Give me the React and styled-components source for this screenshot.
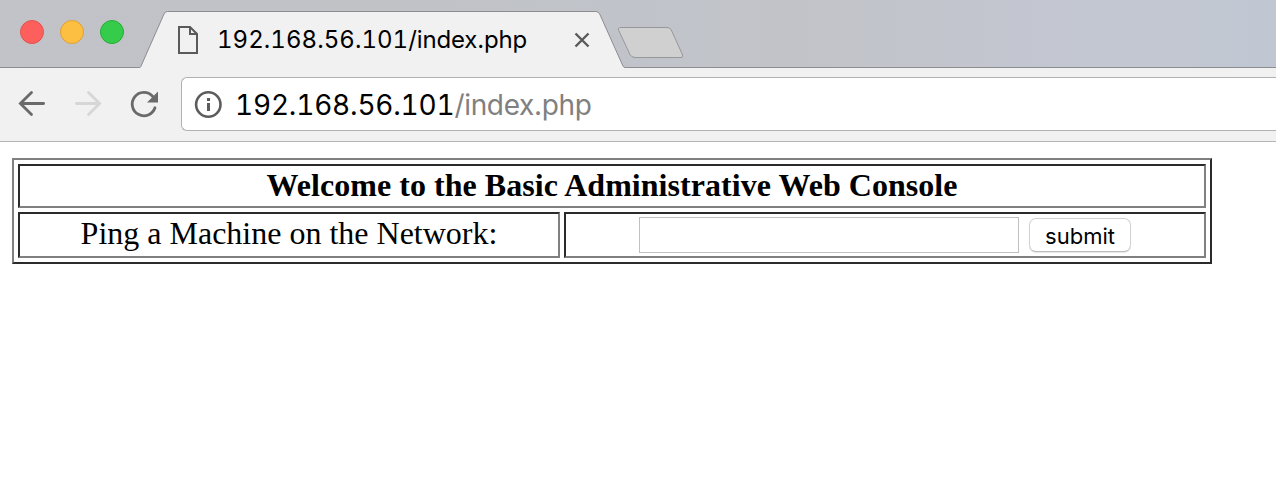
import React from "react";
import styled, { createGlobalStyle } from "styled-components";

const GlobalStyle = createGlobalStyle`
  * { box-sizing: border-box; }
  html, body { margin: 0; background: #fff; overflow: hidden; }
`;

const uiFont = `Inter, "Liberation Sans", sans-serif`;

const Window = styled.div`
  width: 1276px;
  height: 478px;
  display: flex;
  flex-direction: column;
  overflow: hidden;
  background: #fff;
`;

const TabStrip = styled.header`
  display: flex;
  align-items: flex-start;
  height: 68px;
  background: linear-gradient(90deg, #c2c3c8 0%, #c1c2c6 30%, #c0c4ca 50%, #c2c3c8 62%, #c3c7d2 85%, #c1c7d2 100%);
  box-shadow: inset 0 -1px 0 #8c8d90;
`;

const TrafficLights = styled.div`
  display: flex;
  gap: 16px;
  width: 140px;
  padding: 20px 0 0 20px;
`;

const Light = styled.span`
  width: 24px;
  height: 24px;
  border-radius: 50%;
  background: ${(p) => p.$fill};
  border: 1px solid ${(p) => p.$edge};
`;

const Tab = styled.div`
  position: relative;
  display: flex;
  align-items: center;
  width: 485px;
  height: 68px;
  padding: 12px 35px 0 37px;
`;

const TabShape = styled.svg`
  position: absolute;
  inset: 0;
`;

const TabIcon = styled.svg`
  position: relative;
  flex: none;
`;

const Host = styled.span`
  font-variant-numeric: tabular-nums;
  letter-spacing: ${(p) => p.$track};
`;

const TabTitle = styled.span`
  position: relative;
  flex: 1;
  margin-left: 18px;
  font: 400 24px/30px ${uiFont};
  letter-spacing: -0.15px;
  white-space: nowrap;
  color: #000;
`;

const NewTab = styled.svg`
  margin: 26px 0 0 -9px;
`;

const Toolbar = styled.nav`
  display: flex;
  align-items: flex-start;
  height: 74px;
  padding-top: 9px;
  background: #f1f1f1;
  border-bottom: 1px solid #b4b4b4;
`;

const NavButtons = styled.div`
  display: flex;
  gap: 24px;
  width: 181px;
  padding: 11px 0 0 16px;
`;

const AddressBar = styled.div`
  display: flex;
  align-items: center;
  flex: 1;
  height: 54px;
  padding-left: 11px;
  background: #fff;
  border: 1px solid #b1b1b1;
  border-right: 0;
  border-radius: 6px 0 0 6px;
`;

const Url = styled.span`
  margin: 1px 0 0 12px;
  font: 400 28px/34px ${uiFont};
  letter-spacing: -0.35px;
  white-space: nowrap;
  color: #000;
`;

const UrlPath = styled.span`
  color: #808080;
`;

const Page = styled.main`
  flex: 1;
  padding: 16px 12px;
  font-family: "Liberation Serif", "Times New Roman", serif;
  font-size: 32px;
  color: #000;
`;

const ConsoleTable = styled.form`
  display: grid;
  grid-template-columns: 542px 642px;
  grid-template-rows: 44px 46px;
  gap: 4px;
  width: 1200px;
  padding: 4px;
  border: 2px solid;
  border-color: #808080 #2b2b2b #2b2b2b #808080;
`;

const Cell = styled.div`
  display: flex;
  align-items: center;
  justify-content: center;
  grid-column: ${(p) => (p.$wide ? "1 / -1" : "auto")};
  padding-bottom: ${(p) => p.$lift || 0}px;
  border: 2px solid;
  border-color: #2b2b2b #808080 #808080 #2b2b2b;
  font-weight: ${(p) => (p.$wide ? 700 : 400)};
  letter-spacing: ${(p) => (p.$wide ? "0.04px" : "0")};
  line-height: 36px;
  white-space: nowrap;
`;

const HostInput = styled.input`
  width: 380px;
  height: 36px;
  margin: 0 10px 0 0;
  padding: 0 6px;
  border: 1px solid #c0c0c0;
  border-radius: 0;
  background: #fff;
  font: 22px ${uiFont};
  outline: 0;
`;

const SubmitButton = styled.button`
  width: 102px;
  height: 34px;
  padding: 2px 0 0;
  border: 1px solid #d2d2d2;
  border-bottom-color: #bcbcbc;
  border-radius: 7px;
  background: #fff;
  box-shadow: 0 1px 1px rgba(0, 0, 0, 0.1);
  font: 400 22px/30px ${uiFont};
  color: #000;
`;

function PageIcon() {
  return (
    <TabIcon width="22" height="30" viewBox="0 0 22 30" fill="none" stroke="#5a5a5a" strokeWidth="2">
      <path d="M2 2V28H20V9L13 2Z" />
      <path d="M13 2V9H20" />
    </TabIcon>
  );
}

function CloseIcon() {
  return (
    <TabIcon width="16" height="16" viewBox="0 0 16 16" stroke="#5a5a5a" strokeWidth="2.4">
      <path d="M1.5 1.5L14.5 14.5M14.5 1.5L1.5 14.5" />
    </TabIcon>
  );
}

function ArrowIcon({ color, forward }) {
  return (
    <svg width="32" height="32" viewBox="0 0 32 32" fill="none" stroke={color} strokeWidth="2.8" strokeLinecap="round" strokeLinejoin="miter">
      <path d={forward ? "M4.4 15.5H27M16.5 4.4L27.6 15.5L16.5 26.6" : "M27.6 15.5H5M15.5 4.4L4.4 15.5L15.5 26.6"} />
    </svg>
  );
}

function ReloadIcon() {
  return (
    <svg width="32" height="32" viewBox="0 0 32 32" fill="none">
      <path d="M27 19.8A11.7 11.7 0 1 1 24.6 8.2" stroke="#6a6a6a" strokeWidth="2.8" strokeLinecap="round" />
      <path d="M30 3.5V14.5H19Z" fill="#6a6a6a" />
    </svg>
  );
}

function InfoIcon() {
  return (
    <svg width="30" height="30" viewBox="0 0 30 30" fill="none">
      <circle cx="15.3" cy="15.5" r="12.2" stroke="#5c5c5c" strokeWidth="2.6" />
      <path d="M14 9H17V12H14ZM14 14H17V22H14Z" fill="#5c5c5c" />
    </svg>
  );
}

export default function App() {
  return (
    <Window>
      <GlobalStyle />
      <TabStrip>
        <TrafficLights>
          <Light $fill="#fd605c" $edge="#e5504c" />
          <Light $fill="#fdbf42" $edge="#dfa034" />
          <Light $fill="#35cb4b" $edge="#27ac38" />
        </TrafficLights>
        <Tab>
          <TabShape width="485" height="68" viewBox="0 0 485 68">
            <path
              d="M0 68V67.5Q.7 67 1.5 65L24 14Q25 11.5 27.5 11.5H456Q458.5 11.5 459.7 14L482.5 65Q483.5 67.5 485 67.5V68Z"
              fill="#f1f1f1"
            />
            <path
              d="M0 67.5Q.7 67 1.5 65L24 14Q25 11.5 27.5 11.5H456Q458.5 11.5 459.7 14L482.5 65Q483.5 67.5 485 67.5"
              fill="none"
              stroke="#8c8d90"
            />
          </TabShape>
          <PageIcon />
          <TabTitle>
            <Host $track="0.05px">192.168.56.101</Host>/index.php
          </TabTitle>
          <CloseIcon />
        </Tab>
        <NewTab width="70" height="34" viewBox="0 0 70 34">
          <path
            d="M5 1.5H51Q54 1.5 55.3 4L66.6 29Q67.5 31.5 65 31.5H19Q15.5 31.5 14 28.5L2.5 4Q1.5 1.5 5 1.5Z"
            fill="#d0d0d0"
            stroke="#96979a"
          />
        </NewTab>
      </TabStrip>
      <Toolbar>
        <NavButtons>
          <ArrowIcon color="#6a6a6a" />
          <ArrowIcon color="#d6d6d6" forward />
          <ReloadIcon />
        </NavButtons>
        <AddressBar>
          <InfoIcon />
          <Url>
            <Host $track="-0.2px">192.168.56.101</Host>
            <UrlPath>/index.php</UrlPath>
          </Url>
        </AddressBar>
      </Toolbar>
      <Page>
        <ConsoleTable onSubmit={(e) => e.preventDefault()}>
          <Cell $wide $lift={2}>Welcome to the Basic Administrative Web Console</Cell>
          <Cell $lift={4}>Ping a Machine on the Network:</Cell>
          <Cell>
            <HostInput type="text" aria-label="Host" />
            <SubmitButton type="submit">submit</SubmitButton>
          </Cell>
        </ConsoleTable>
      </Page>
    </Window>
  );
}
